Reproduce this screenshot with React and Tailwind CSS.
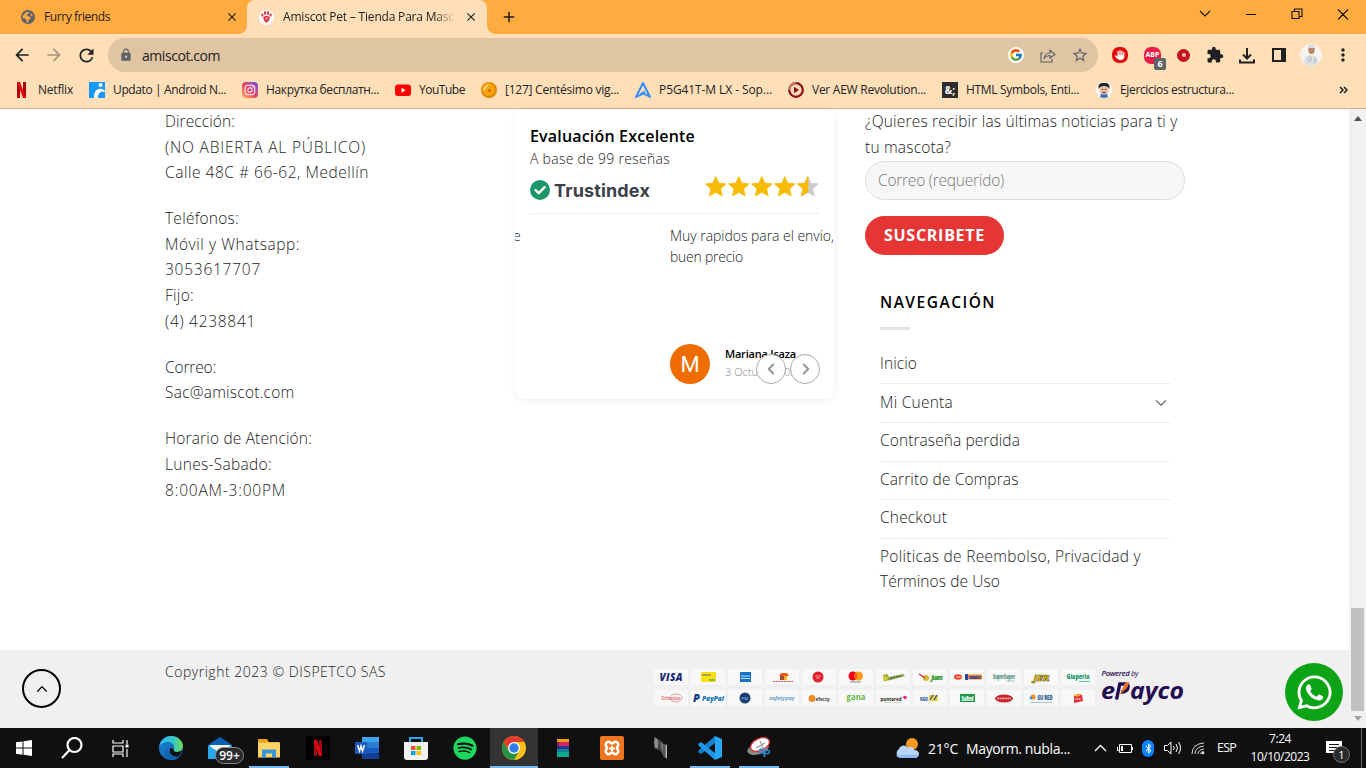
import React, { useLayoutEffect, useRef } from "react";
import { MdArrowBack, MdArrowForward, MdRefresh, MdLock, MdExtension, MdMoreVert, MdStarBorder, MdClose, MdAdd } from "react-icons/md";
import { FaWhatsapp, FaSpotify, FaInstagram, FaHand, FaBluetoothB } from "react-icons/fa6";
import { FcGoogle } from "react-icons/fc";
import { ChevronDown, ChevronLeft, ChevronRight, ChevronUp } from "lucide-react";

/* One line of text whose tracking is adjusted so that it spans `w` pixels. */
function Line({ w, className = "", children }) {
  const ref = useRef(null);
  useLayoutEffect(() => {
    const el = ref.current;
    const fit = () => {
      el.style.letterSpacing = "0px";
      const natural = el.getBoundingClientRect().width;
      el.style.letterSpacing = (w - natural) / el.textContent.length + "px";
    };
    fit();
    document.fonts?.ready.then(fit);
  }, [w]);
  return (
    <span className={"block " + className}>
      <span ref={ref} className="inline-block whitespace-nowrap">{children}</span>
    </span>
  );
}

/* ---------- browser ---------- */

function Globe() {
  return (
    <svg width="14" height="14" viewBox="0 0 14 14">
      <circle cx="7" cy="7" r="7" fill="#5f6368" />
      <path d="M2 5.500 5 2.200 8.200 2l-.6 1.800-2 .8.6 1.400 2.600.8 1 2-2 .8-.6 2.600-1.600.6.2-2.400L4 8.600 1.600 8z M10 3.400l2 2.400-1.600.4-.9-1.500z" fill="#ffab40" />
    </svg>
  );
}

function TabStrip() {
  return (
    <div className="flex h-[34px] bg-[#ffab40] text-[12px] text-[#202124]">
      <div className="relative flex w-[247px] items-center pl-[21px] pr-[8px]">
        <Globe />
        <Line w={66} className="ml-[9px] flex-1">Furry friends</Line>
        <MdClose size={14} />
        <span className="absolute bottom-0 right-0 size-[8px] bg-[radial-gradient(circle_at_0_0,transparent_7.500px,#ffdfb8_8px)]" />
      </div>
      <div className="flex w-[240px] items-center rounded-t-[8px] bg-[#ffdfb8] pl-[12px] pr-[9px]">
        <span className="flex size-[15px] items-center justify-center rounded-full bg-white">
          <svg width="11" height="12" viewBox="0 0 11 12" fill="#d33c42">
            <ellipse cx="1.400" cy="4" rx="1.100" ry="1.800" /><ellipse cx="4" cy="2" rx="1.100" ry="1.900" />
            <ellipse cx="7" cy="2" rx="1.100" ry="1.900" /><ellipse cx="9.600" cy="4" rx="1.100" ry="1.800" />
            <path d="M5.500 4.500 9 6.200 8 9.400 5.500 12 3 9.400 2 6.200z" /><circle cx="5.500" cy="7.400" r="1" fill="#f6c7c9" />
          </svg>
        </span>
        <div className="ml-[9px] w-[172px] overflow-hidden [mask-image:linear-gradient(to_right,black_88%,transparent)]">
          <Line w={194}>Amiscot Pet – Tienda Para Mascotas</Line>
        </div>
        <MdClose size={14} className="ml-auto" />
      </div>
      <div className="flex flex-col justify-end"><span className="size-[8px] bg-[radial-gradient(circle_at_100%_0,transparent_7.500px,#ffdfb8_8px)]" /></div>
      <MdAdd size={18} className="ml-[5px] mt-[8px]" />
      <svg className="ml-auto mr-[17px] mt-[8px]" width="150" height="13" viewBox="0 0 150 13" fill="none" stroke="#111" strokeWidth="1.100">
        <path d="M1 3l5 5 5-5M47 6.500h10M93 3.500h7v7h-7zM95.500 3.500v-2.500h7.500v7.500h-3M139 1.500l10 10M149 1.500l-10 10" />
      </svg>
    </div>
  );
}

function Extensions() {
  return (
    <>
      <span className="ml-[14px] flex size-[16px] items-center justify-center rounded-[7px] bg-[#e60b0b] text-white"><FaHand size={10} /></span>
      <span className="relative ml-[16px] flex size-[17px] items-center justify-center rounded-[7px] bg-[#ee1d48] text-[7px] font-bold text-white">
        ABP
        <span className="absolute left-[10px] top-[11px] flex h-[12px] w-[12px] items-center justify-center rounded-[2px] bg-[#5f6368] text-[9px] leading-none">6</span>
      </span>
      <span className="ml-[16px] flex size-[13px] items-center justify-center rounded-full bg-[#c6151c]"><span className="h-[4px] w-[4px] rounded-full bg-[#f5c5c5]" /></span>
      <MdExtension size={18} className="ml-[16px]" />
      <svg className="ml-[15px]" width="16" height="17" viewBox="0 0 16 17" fill="none" stroke="#202124" strokeWidth="2"><path d="M8 1v10M4 7.500l4 4 4-4M1 12.500v3h14v-3" /></svg>
      <svg className="ml-[17px]" width="14" height="14" viewBox="0 0 14 14"><path d="M1 1h12v12H1z" fill="none" stroke="#202124" strokeWidth="2" /><path d="M9 1h5v12H9z" fill="#202124" /></svg>
      <svg className="ml-[14px]" width="22" height="22" viewBox="0 0 22 22">
        <circle cx="11" cy="11" r="11" fill="#f7f3ee" />
        <path d="M4 19c0-6 3-8 7-8s7 2 7 8c-3 3-11 3-14 0z" fill="#dedfe4" />
        <ellipse cx="11.500" cy="5.500" rx="3.200" ry="4.600" fill="#b98568" /><path d="M8.500 4c0-4 6-4 6 0z" fill="#ddd" />
        <path d="M10 12l1.500 5M7 14l3 4M16 14l-2 5" stroke="#aeb0ba" />
      </svg>
      <MdMoreVert size={20} className="ml-[11px]" />
    </>
  );
}

function Toolbar() {
  return (
    <div className="flex h-[34px] items-center text-[#202124]">
      <MdArrowBack size={20} className="ml-[12px]" />
      <MdArrowForward size={20} className="ml-[12px] text-[#a8947c]" />
      <MdRefresh size={21} className="ml-[12px]" />
      <div className="ml-[11px] flex h-[34px] w-[990px] items-center rounded-full bg-[#dfc5a2] pl-[11px] pr-[9px]">
        <MdLock size={14} className="text-[#5f6368]" />
        <Line w={78} className="ml-[9px] text-[14px]">amiscot.com</Line>
        <span className="ml-auto flex size-[16px] items-center justify-center rounded-full bg-white"><FcGoogle size={14} /></span>
        <svg className="ml-[16px]" width="16" height="15" viewBox="0 0 16 15" fill="none" stroke="#5f6368" strokeWidth="1.200"><path d="M3 5H1v9h11v-3M4 11c.5-4 2.500-6 6-6V2l5 4.500L10 10V7.500c-3 0-4.500 1-6 3.500z" /></svg>
        <MdStarBorder size={18} className="ml-[15px] text-[#5f6368]" />
      </div>
      <Extensions />
    </div>
  );
}

const bookmarks = [
  ["w-[75px]", "Netflix", 35, <svg width="16" height="16" viewBox="0 0 16 16"><path d="M3 0h3v16H3z M9 0h3v16H9z" fill="#b1060f" /><path d="M3 0h3l6 16H9z" fill="#e50914" /></svg>],
  ["w-[153px]", "Updato | Android N...", 113, <svg width="16" height="16" viewBox="0 0 16 16"><path d="M0 0h16v16H0z" fill="#1499ff" /><circle cx="11.500" cy="3" r="2" fill="#fff" /><path d="M5 16c0-6 2-10 8-9 2 .3 3 1.500 3 3-5-1-7 1-7 6z" fill="#fff" /></svg>],
  ["w-[153px]", "Накрутка бесплатн...", 113, <span className="flex size-4 items-center justify-center rounded-[4px] bg-linear-to-tr from-[#fdb043] via-[#ea3468] to-[#5a45dc] text-white"><FaInstagram size={12} /></span>],
  ["w-[86px]", "YouTube", 46, <svg width="16" height="16" viewBox="0 0 16 16"><rect y="2.500" width="16" height="11.500" rx="3" fill="#f00" /><path d="M6.500 5.800v5l4-2.500z" fill="#fff" /></svg>],
  ["w-[154px]", "[127] Centésimo vig...", 114, <svg width="16" height="16" viewBox="0 0 16 16"><circle cx="8" cy="8" r="8" fill="#df8503" /><circle cx="7.500" cy="7.500" r="6.500" fill="#f7a20e" /><path d="M2.500 9A6 6 0 0 1 7 2.500c2 0 .5 1.500-1 2.500S4 9.500 2.500 9z" fill="#ffd477" /><circle cx="8.500" cy="8.500" r="1.200" fill="#d4470e" /></svg>],
  ["w-[153px]", "P5G41T-M LX - Sop...", 113, <svg width="16" height="16" viewBox="0 0 16 16" fill="none" stroke="#2e8cff" strokeWidth="1.900" strokeLinejoin="round"><path d="M8 1 15 15 9 11.500 1 15z M5 12.500 10 9.500" /></svg>],
  ["w-[154px]", "Ver AEW Revolution...", 114, <svg width="16" height="16" viewBox="0 0 16 16"><circle cx="8" cy="8" r="6.800" fill="none" stroke="#8f1116" strokeWidth="2.200" /><path d="M1.200 8A6.800 6.800 0 0 1 8 1.200" fill="none" stroke="#c67d6b" strokeWidth="2.200" /><path d="M6 4.800v6.400L11 8z" fill="#8f1116" /></svg>],
  ["w-[154px]", "HTML Symbols, Enti...", 113, <span className="flex size-4 items-center justify-center bg-[#2c2c2c] text-[10px] font-bold text-white">&amp;;</span>],
  ["w-[154px]", "Ejercicios estructura...", 114, <svg width="16" height="16" viewBox="0 0 16 16"><circle cx="8" cy="8" r="8" fill="#fff" /><path d="M5 11h6l1 4q-4 2-8 0z" fill="#3978cb" /><path d="M3.500 5h9v4q-1 3.500-4.500 3.500T3.500 9z" fill="#f3b99b" /><path d="M2.500 7C2 1 5 1 8 1s6 0 5.500 6L12 5 8 4 4 5z" fill="#222" /><path d="M6 7.500h1M9 7.500h1M6.500 10.500h3" stroke="#333" /></svg>],
];

function Bookmarks() {
  return (
    <div className="flex h-[37px] items-center border-b border-[#cdb290] pl-[14px] text-[12px] text-[#202124]">
      {bookmarks.map(([cell, label, w, icon]) => (
        <div key={label} className={"flex shrink-0 items-center gap-[8px] " + cell}>
          <span className="w-4 shrink-0">{icon}</span>
          <Line w={w}>{label}</Line>
        </div>
      ))}
      <svg className="ml-auto mr-[18px]" width="9" height="8" viewBox="0 0 9 8" fill="none" stroke="#202124" strokeWidth="1.500"><path d="M1 1l3 3-3 3M5 1l3 3-3 3" /></svg>
    </div>
  );
}

/* ---------- page ---------- */

const contact = [
  [["Dirección:", 70], ["(NO ABIERTA AL PÚBLICO)", 201], ["Calle 48C # 66-62, Medellín", 204]],
  [["Teléfonos:", 74], ["Móvil y Whatsapp:", 135], ["3053617707", 96], ["Fijo:", 29], ["(4) 4238841", 91]],
  [["Correo:", 51], ["Sac@amiscot.com", 129.500]],
  [["Horario de Atención:", 147], ["Lunes-Sabado:", 107], ["8:00AM-3:00PM", 121]],
];

function Contact() {
  return (
    <div className="flex w-[320px] flex-col gap-[20.500px] text-[15.500px] font-[350] leading-[25.600px] text-[#222]">
      {contact.map((block) => (
        <div key={block[0][0]}>
          {block.map(([t, w]) => <Line key={t} w={w}>{t}</Line>)}
        </div>
      ))}
    </div>
  );
}

const STAR = "M12 .6l3.300 7.400 8.100.8-6.100 5.400 1.800 7.900L12 18l-7.100 4.100 1.800-7.900L.6 8.800l8.100-.8z";

function Stars() {
  return (
    <svg width="115" height="24" viewBox="0 0 115 24">
      {[0, 23, 46, 69].map((x) => <path key={x} d={STAR} transform={`translate(${x} 1) scale(.9)`} fill="#f6bb06" stroke="#f6bb06" strokeLinejoin="round" />)}
      <path d={STAR} transform="translate(92 1) scale(.9)" fill="#ccc" stroke="#ccc" strokeLinejoin="round" />
      <path d="M12 .6V18l-7.100 4.100 1.800-7.900L.6 8.800l8.100-.8z" transform="translate(92 1) scale(.9)" fill="#f6bb06" stroke="#f6bb06" strokeLinejoin="round" />
    </svg>
  );
}

function Reviews() {
  return (
    <div className="h-[290px] w-[320px] overflow-hidden rounded-[10px] bg-white px-[15px] pt-[15px] shadow-[0_1px_6px_rgba(0,0,0,0.08)]">
      <Line w={165} className="text-[16px] font-semibold leading-[24px] text-black">Evaluación Excelente</Line>
      <Line w={140} className="text-[14px] font-[350] leading-[22px] text-[#222]">A base de 99 reseñas</Line>
      <div className="mt-[4px] flex h-[32px] items-center">
        <svg width="20" height="20" viewBox="0 0 20 20"><circle cx="10" cy="10" r="10" fill="#1b976a" /><path d="M5.500 10l3.200 3.200 6-6" fill="none" stroke="#fff" strokeWidth="2.400" strokeLinecap="round" strokeLinejoin="round" /></svg>
        <Line w={96} className="ml-[4px] font-[Inter] text-[18px] font-bold text-[#3b404b]">Trustindex</Line>
        <div className="mb-[6px] ml-auto"><Stars /></div>
      </div>
      <div className="mt-[7px] border-t border-[#eee]" />
      <div className="-mx-[15px] mt-[11px] flex h-[110px] text-[14px] font-[350] leading-[21px] text-[#222]">
        <span className="w-[155px] -indent-[2px]">e</span>
        <div><Line w={164}>Muy rapidos para el envio,</Line><Line w={73}>buen precio</Line></div>
      </div>
      <div className="relative ml-[140px] mt-[9px] flex h-[40px]">
        <span className="flex size-[40px] shrink-0 items-center justify-center rounded-full bg-[#ef6c00] font-[Roboto] text-[22px] text-white">M</span>
        <div className="ml-[15px] pt-[1px]">
          <Line w={71} className="text-[11px] font-semibold leading-[18px] text-black">Mariana Isaza</Line>
          <Line w={78} className="text-[11px] font-light leading-[18px] text-[#888]">3 Octubre 2023</Line>
        </div>
        <div className="absolute right-0 top-[10px] flex gap-[4px] text-[#999]">
          <span className="flex size-[30px] items-center justify-center rounded-full border border-[#aaa] bg-white pr-[1px]"><ChevronLeft size={18} strokeWidth={2.800} /></span>
          <span className="flex size-[30px] items-center justify-center rounded-full border border-[#aaa] bg-white pl-[1px]"><ChevronRight size={18} strokeWidth={2.800} /></span>
        </div>
      </div>
    </div>
  );
}

const nav = [["Inicio", 37], ["Mi Cuenta", 73], ["Contraseña perdida", 140], ["Carrito de Compras", 138.500], ["Checkout", 67]];

function Sidebar() {
  return (
    <div className="w-[320px] text-[15.500px] font-[350] leading-[25.600px] text-[#222]">
      <Line w={312.500}>¿Quieres recibir las últimas noticias para ti y</Line>
      <Line w={86}>tu mascota?</Line>
      <div className="mt-[1px] flex h-[39px] items-center rounded-full border border-[#ddd] bg-[#f7f7f7] pl-[12px] text-[#777]">
        <Line w={126}>Correo (requerido)</Line>
      </div>
      <div className="mt-[16px] flex h-[39px] w-[139px] items-center rounded-full bg-[#e63535] pl-[19px] text-[16px] font-bold text-white">
        <Line w={101}>SUSCRIBETE</Line>
      </div>
      <div className="mt-[35px] px-[15px]">
        <Line w={116} className="text-[15.500px] font-semibold text-black">NAVEGACIÓN</Line>
        <div className="mt-[11px] h-[3px] w-[30px] bg-[#e3e3e3]" />
        <div className="mt-[16px]">
          {nav.map(([t, w], i) => (
            <div key={t} className="flex h-[38.600px] items-center border-b border-[#ececec] pb-[1.500px]">
              <Line w={w}>{t}</Line>
              {i === 1 && <ChevronDown size={18} strokeWidth={1.900} className="ml-auto mt-[2px] text-[#777]" />}
            </div>
          ))}
          <div className="pt-[5px]">
            <Line w={261}>Politicas de Reembolso, Privacidad y</Line>
            <Line w={120}>Términos de Uso</Line>
          </div>
        </div>
      </div>
    </div>
  );
}

/* Each payment badge is a small 34×16 drawing. */
const badges = [
  <text x="17" y="12" fontSize="10" fontWeight="800" fontStyle="italic" fill="#1a2a73" textLength="23">VISA</text>,
  <><rect x="10" y="3" width="15" height="10" fill="#f7df12" /><path d="M11 6h9" stroke="#4d7391" /><path d="M18 11h6" stroke="#278b8b" /></>,
  <><rect x="12" y="3" width="11" height="10" fill="#1674c4" /><path d="M13 7h9M13 9.500h9" stroke="#c4e0f5" /></>,
  <><path d="M14 7l2-3h6l2 3z" fill="#e45d19" /><path d="M15 7h6v4h-6z" fill="#a0522d" /><path d="M19 7h3v4h-3z" fill="#f6b21b" /><path d="M8 12.500h20" stroke="#e14b4b" strokeDasharray="2 .7" /></>,
  <><circle cx="16" cy="8" r="5.500" fill="#e3202b" /><path d="M13 7h6M14 9h4" stroke="#ffc0c0" strokeWidth=".8" /></>,
  <><circle cx="14" cy="7" r="4.500" fill="#ea001b" /><circle cx="19.500" cy="7" r="4.500" fill="#f79e1b" /><path d="M16.800 3.500a4.500 4.500 0 0 1 0 7a4.500 4.500 0 0 1 0-7" fill="#ff5f00" /><path d="M11 13h11" stroke="#555" strokeWidth=".7" /></>,
  <><path d="M7 6l4-1 2 3 14-3 2 2-14 4-7 1z" fill="#8ba63b" /><path d="M9 5l1 3 3 0-2 2 1 2-3-1-2 1 1-3z" fill="#e4cc24" /><path d="M14 9l12-2" stroke="#3d567c" strokeDasharray="2 1" /></>,
  <><circle cx="13" cy="9" r="3" fill="#d5b82d" /><path d="M6 5l6 4" stroke="#d13434" strokeWidth="1.500" /><text x="24" y="11" fontSize="7" fontWeight="800" fontStyle="italic" fill="#41a13c" textLength="12">Juers</text></>,
  <><ellipse cx="8" cy="8" rx="4" ry="2.800" fill="#e8422c" /><path d="M6 8h5" stroke="#ffd8b3" /><rect x="15" y="5.500" width="17" height="5" rx="1" fill="#ee8427" /><path d="M15 5h3v6h-3z" fill="#2a4a9b" /><text x="25" y="10" fontSize="4" fontWeight="800" fill="#284591" textLength="12">BARATO</text></>,
  <><text x="17" y="10" fontSize="6" fontWeight="800" fill="#51937c" textLength="22" lengthAdjust="spacingAndGlyphs">SuperSuper</text><path d="M19 12h9" stroke="#7aa897" strokeWidth=".6" /></>,
  <text x="17.500" y="12" fontSize="9" fontWeight="800" fontStyle="italic" fill="#f5c800" stroke="#3c3c18" strokeWidth=".5" textLength="16" lengthAdjust="spacingAndGlyphs">JER</text>,
  <><text x="17" y="10" fontSize="7.500" fontWeight="800" fill="#15966b" textLength="23" lengthAdjust="spacingAndGlyphs">Giaperla</text><path d="M18 12.500h11" stroke="#3aa986" strokeWidth=".8" /></>,
  <><text x="17" y="10" fontSize="5.500" fontWeight="600" fill="#de5b59" textLength="19" lengthAdjust="spacingAndGlyphs">Drifwoplaza</text><ellipse cx="22" cy="8" rx="6" ry="4" fill="none" stroke="#e17977" strokeWidth=".7" /></>,
  <><text x="5.500" y="12" fontSize="11" fontWeight="900" fontStyle="italic" fill="#123b83">P</text><text x="22" y="11" fontSize="7" fontWeight="800" fontStyle="italic" fill="#1874b8" textLength="22" lengthAdjust="spacingAndGlyphs">PayPal</text></>,
  <><circle cx="17" cy="8" r="5.500" fill="#173f70" /><text x="17" y="9.500" fontSize="4" fill="#c9def4" textLength="7">PSE</text></>,
  <text x="17" y="10" fontSize="6" fontStyle="italic" fontWeight="600" fill="#4c8fbe" textLength="25" lengthAdjust="spacingAndGlyphs">safetypay</text>,
  <><circle cx="10" cy="8.500" r="3.400" fill="#ee8b25" /><text x="20.500" y="10.500" fontSize="6" fontWeight="700" fill="#3c3c3c" textLength="14" lengthAdjust="spacingAndGlyphs">efecty</text></>,
  <text x="17" y="10" fontSize="9" fontWeight="700" fill="#66b842" textLength="19" lengthAdjust="spacingAndGlyphs">gana</text>,
  <><text x="15" y="10.500" fontSize="6" fontWeight="700" fill="#222" textLength="21" lengthAdjust="spacingAndGlyphs">puntored</text><circle cx="29" cy="7.500" r="1.800" fill="#df2a86" /><path d="M8 12.500h16" stroke="#aaa" strokeWidth=".5" /></>,
  <><text x="11" y="11" fontSize="5" fontWeight="800" fill="#2f63a1" textLength="8" lengthAdjust="spacingAndGlyphs">RED</text><path d="M16 5h9v6h-9z" fill="#ecd14b" /><path d="M17 10l3-5M21 10l3-5" stroke="#355386" strokeWidth="1.300" /></>,
  <><rect x="10" y="4" width="15" height="8" fill="#169b45" /><text x="17.500" y="10.500" fontSize="6.500" fontWeight="800" fill="#fff" textLength="12" lengthAdjust="spacingAndGlyphs">SuRed</text></>,
  <><ellipse cx="17" cy="8.500" rx="9" ry="4" fill="#c9252d" /><path d="M10 8.500h14" stroke="#f0bbbb" strokeWidth="1.500" strokeDasharray="2 .6" /></>,
  <><circle cx="9" cy="7" r="2.500" fill="#f28d21" /><circle cx="7" cy="8" r="1.500" fill="#329be0" /><text x="21" y="10" fontSize="6" fontWeight="800" fill="#1e568e" textLength="15" lengthAdjust="spacingAndGlyphs">SU RED</text><path d="M6 12.500h22" stroke="#8aa" strokeWidth=".7" /></>,
  <><path d="M13 6l4-2 4 1 1 6-9 2z" fill="#e32f35" /><path d="M13 5l3 1 3-1" stroke="#f5bd26" strokeWidth="1.500" fill="none" /><path d="M14 9h6" stroke="#fff" strokeDasharray="1.500 .5" /></>,
];

function Payments() {
  return (
    <div className="grid w-[441px] grid-cols-12 gap-x-[3px] gap-y-[5px]">
      {badges.map((b, i) => (
        <svg key={i} width="34" height="16" viewBox="0 0 34 16" className="bg-[#f8f8f8] font-['Open_Sans']" textAnchor="middle" fill="none">{b}</svg>
      ))}
    </div>
  );
}

function EPayco() {
  return (
    <svg className="ml-[6px] font-['Open_Sans']" width="86" height="40" viewBox="0 0 86 40" fill="#230b50" fontStyle="italic">
      <text x="0.500" y="8" fontSize="7.500" fontWeight="600" textLength="37">Powered <tspan fontWeight="400">by</tspan></text>
      <text x="0" y="31" fontSize="24" fontWeight="700" textLength="14" lengthAdjust="spacingAndGlyphs">e</text>
      <path d="M15.500 31.500 18.800 16h5.500q3.500 0 2.700 3.500-1 4.500-7 4.500" fill="none" stroke="#230b50" strokeWidth="3.400" />
      <path d="M28.500 14 26 20l-7.500 7L24 15z" fill="#f36f21" />
      <text x="29" y="31" fontSize="24" fontWeight="700" textLength="54" lengthAdjust="spacingAndGlyphs">ayco</text>
    </svg>
  );
}

function Page() {
  return (
    <div className="flex h-[619px]">
      <div className="flex w-[1349px] flex-col bg-white font-['Open_Sans',sans-serif]">
        <div className="flex h-[541px] gap-[30px] pl-[165px]">
          <Contact />
          <Reviews />
          <Sidebar />
        </div>
        <div className="flex h-[78px] items-start bg-[#f0f0f0] pl-[22px]">
          <span className="mt-[19px] flex size-[39px] items-center justify-center rounded-full border-2 border-black"><ChevronUp size={18} strokeWidth={1.500} /></span>
          <div className="ml-[104px] mt-[9px] w-[489px] text-[14px] font-[350] leading-[25px] text-[#222]"><Line w={221}>Copyright 2023 © DISPETCO SAS</Line></div>
          <div className="mt-[19px]"><Payments /></div>
          <div className="mt-[18px]"><EPayco /></div>
          <span className="ml-auto mr-[6px] mt-[13px] flex size-[58px] items-center justify-center rounded-full bg-[#0da317] text-white"><FaWhatsapp size={39} /></span>
        </div>
      </div>
      <div className="flex w-[17px] flex-col items-center justify-between bg-[#f1f1f1] py-[7px]">
        <svg width="8" height="5" viewBox="0 0 8 5"><path d="M0 5 4 0l4 5z" fill="#505050" /></svg>
        <div className="flex flex-col items-center gap-[5px]">
          <div className="h-[103px] w-[13px] bg-[#c1c1c1]" />
          <svg width="8" height="5" viewBox="0 0 8 5"><path d="M0 0 4 5l4-5z" fill="#a3a3a3" /></svg>
        </div>
      </div>
    </div>
  );
}

/* ---------- taskbar ---------- */

const apps = [
  ["Edge", "", <svg width="24" height="24" viewBox="0 0 24 24"><defs><linearGradient id="ea"><stop stopColor="#2bb7f3" /><stop offset=".6" stopColor="#36c7c6" /><stop offset="1" stopColor="#70dc4c" /></linearGradient><linearGradient id="eb" x2="1" y2="1"><stop stopColor="#198ade" /><stop offset="1" stopColor="#114c92" /></linearGradient></defs><circle cx="12" cy="12" r="12" fill="url(#eb)" /><path d="M.3 10C2 3 7 0 12 0c7 0 12 5 12 10 0 4-3 6-6.500 6-3 0-4-1.500-3-3C16 10 14 6 9 6c-4 0-7 2-8.700 4z" fill="url(#ea)" /><path d="M15 13c-1 2 0 3 3 3 2 0 4-.7 5-2-1 3-2 5-4 6.500C13 21 9 17 11.500 12z" fill="#101010" /><path d="M9 11c-3 6 1 11 8 11 2 0 3-1 4-2-2 3-5 4-9 4C6 24 4 15 9 11z" fill="#1366b5" /></svg>],
  ["Mail", "", <span className="relative"><svg width="24" height="24" viewBox="0 0 24 24"><path d="M0 9 12 1l12 8v14H0z" fill="#0d5fb4" /><path d="M2 9h20v8H2z" fill="#f4f4f4" /><path d="M0 9l12 8 12-8v14H0z" fill="#28a8ea" /></svg><span className="absolute left-[7px] top-[11px] flex h-[17px] w-[29px] items-center justify-center rounded-full border border-[#888] bg-[#272b2e] text-[12px] font-semibold leading-none text-white">99+</span></span>],
  ["Explorer", "w-[40px]", <svg width="22" height="19" viewBox="0 0 22 19"><path d="M0 0h9l2 3h10v15H0z" fill="#e8a317" /><path d="M0 3.500h22v15H0z" fill="#ffd567" /><path d="M4 18.500v-8h14v8h-4v-4H8v4z" fill="#3796dc" /></svg>],
  ["Netflix", "", <svg width="24" height="24" viewBox="0 0 24 24"><path d="M0 0h24v24H0z" fill="#000" /><path d="M8 4h3v16H8zM13 4h3v16h-3z" fill="#a5060e" /><path d="M8 4h3l5 16h-3z" fill="#e50914" /></svg>],
  ["Word", "", <svg width="24" height="22" viewBox="0 0 24 22"><path d="M7 0h17v6H7z" fill="#41a5ee" /><path d="M7 5h17v6H7z" fill="#2b7cd3" /><path d="M7 11h17v5H7z" fill="#185abd" /><path d="M7 16h17v6H7z" fill="#103f91" /><rect y="5" width="12" height="12" rx="1" fill="#185abd" /><path d="M2.500 8 4.500 14 6 9l1.500 5L9.500 8" fill="none" stroke="#fff" strokeWidth="1.500" /></svg>],
  ["Store", "", <svg width="24" height="24" viewBox="0 0 24 24"><path d="M6 7V2h12v5" fill="none" stroke="#2aa4e5" strokeWidth="2" /><path d="M0 6h24v15q0 3-3 3H3q-3 0-3-3z" fill="#f1f1f1" /><path d="M7 10h4.500v4H7z" fill="#f25022" /><path d="M12.500 10H17v4h-4.500z" fill="#7fba00" /><path d="M7 15h4.500v4H7z" fill="#00a4ef" /><path d="M12.500 15H17v4h-4.500z" fill="#ffb900" /></svg>],
  ["Spotify", "", <FaSpotify size={24} className="text-[#1ed760]" />],
  ["Chrome", "w-[48px]", <svg width="24" height="24" viewBox="0 0 24 24"><circle cx="12" cy="12" r="12" fill="#fbc116" /><path d="M1.600 6A12 12 0 0 1 22.400 6H12v6l-5 3z" fill="#e33b2e" /><path d="M1.600 6A12 12 0 0 0 12 24l5.200-9H12L6.800 15z" fill="#229342" /><circle cx="12" cy="12" r="6" fill="#fff" /><circle cx="12" cy="12" r="4.700" fill="#2f7de9" /></svg>],
  ["Stripes", "", <svg width="12" height="18" viewBox="0 0 12 18"><path d="M0 0h12v4H0z" fill="#ee9b16" /><path d="M0 3h12v4H0z" fill="#d22965" /><path d="M0 7h12v4H0z" fill="#2b3190" /><path d="M0 10h12v4H0z" fill="#10809b" /><path d="M0 13h12v5H0z" fill="#0caa8e" /><path d="M1 3v6" stroke="#202050" /></svg>],
  ["Xampp", "", <svg width="24" height="24" viewBox="0 0 24 24"><rect width="24" height="24" rx="2" fill="#ed751f" /><path d="M7.500 6c2.500-1 3 1.500 4.500 1.500S14 5 16.500 6c3 1.500 1.500 4 .5 6 1 2 2.500 4.500-.5 6-2.500 1-3-1.500-4.500-1.500S10 19 7.500 18c-3-1.500-1.500-4-.5-6-1-2-2.500-4.500.5-6z" fill="none" stroke="#fff" strokeWidth="2.600" /><path d="M9 12.500h6M12 10v5" stroke="#fff" strokeWidth="2" /></svg>],
  ["Device", "", <svg width="16" height="24" viewBox="0 0 16 24"><path d="M1 1l9 5v12l-4-4-4-1z" fill="#444" /><path d="M2 1l3 3v8l-3 0-1-5z" fill="#8a8a8a" /><path d="M5 6l9 3v14l-4-3-1-6z" fill="#777" /><path d="M11 8v12M7 6v8" stroke="#303030" /><path d="M13.500 9v13" stroke="#bbb" /></svg>],
  ["Code", "w-[40px]", <svg width="24" height="24" viewBox="0 0 24 24"><path d="M17 0 24 3v18l-7 3z" fill="#27a7f5" /><path d="M17 0v7L3 18l-3-2 1-2z" fill="#1580cb" /><path d="M17 24v-7L3 6 0 8l1 2z" fill="#2196e6" /></svg>],
  ["Snip", "w-[40px]", <svg width="24" height="24" viewBox="0 0 24 24"><ellipse cx="11" cy="13" rx="11" ry="5.500" fill="#888" transform="rotate(-15 11 13)" /><ellipse cx="13" cy="8.500" rx="10" ry="6" fill="#fff" stroke="#d92e35" strokeWidth="1.300" transform="rotate(-25 13 8.500)" /><path d="M13 5l4 9M9 12l9-5" stroke="#999" strokeWidth="1.200" /><circle cx="14.500" cy="15" r="2" fill="none" stroke="#2b8bd5" strokeWidth="1.400" /><ellipse cx="20" cy="16" rx="2.500" ry="1.700" fill="none" stroke="#2b8bd5" strokeWidth="1.400" /><path d="M17 15l.5 6" stroke="#2b8bd5" strokeWidth="1.800" /></svg>],
];

function Tray() {
  return (
    <div className="ml-auto flex items-center text-white">
      <svg width="25" height="20" viewBox="0 0 25 20"><circle cx="17" cy="6" r="6" fill="#f59a24" /><path d="M5 20a5 5 0 0 1-1-9c1-4 7-5 9-1 2-2 6-1 6 2 7 0 6 8 1 8z" fill="#b7d4fa" /><path d="M5 20a5 5 0 0 1-4-3h22q-1 3-3 3z" fill="#8fb9f4" /></svg>
      <Line w={30} className="ml-[8px] text-[14px]">21°C</Line>
      <Line w={104} className="ml-[8px] text-[14px]">Mayorm. nubla...</Line>
      <svg className="ml-[24px]" width="13" height="9" viewBox="0 0 13 9" fill="none" stroke="#fff" strokeWidth="1.300"><path d="M1 7l5.500-5.500L12 7" /></svg>
      <svg className="ml-[10px]" width="16" height="11" viewBox="0 0 16 11"><path d="M2.500 1.500h12v8h-12zM.5 4v3.500h2" fill="none" stroke="#fff" /><path d="M4 3h2v5H4zM14 4h2v3h-2z" fill="#fff" /></svg>
      <span className="ml-[9px] flex h-[17px] w-[12px] items-center justify-center rounded-full bg-[#0883ff]"><FaBluetoothB size={11} /></span>
      <svg className="ml-[10px]" width="17" height="14" viewBox="0 0 17 14" fill="none" stroke="#fff"><path d="M.5 4.500h3L7 1v12L3.500 9.500h-3zM9.500 5q1.500 2 0 4M12 3q3 4 0 8M14.500 1q4 6 0 12" /></svg>
      <svg className="ml-[10px]" width="15" height="14" viewBox="0 0 15 14" fill="none" stroke="#ddd"><path d="M1 13Q1 3 13 2M4 13q0-7 9-8M7 13q0-4 6-5M9.500 13q0-2 3-2.500" /><circle cx="12" cy="12" r="1" fill="#fff" /></svg>
      <Line w={19} className="ml-[11px] text-[12.500px]">ESP</Line>
      <div className="ml-[14px] flex w-[60px] flex-col items-center text-[12px] leading-[18px]">
        <Line w={22}>7:24</Line>
        <Line w={59}>10/10/2023</Line>
      </div>
      <div className="ml-[16px] mr-[11px] flex h-[24px] w-[24px] pt-[4px]">
        <div className="relative">
          <svg width="17" height="17" viewBox="0 0 17 17"><path d="M0 1h16v12h-4v3l-3-3H0z" fill="#fff" /><path d="M3 4.500h10M3 7.500h10M3 10.500h6" stroke="#111" /></svg>
          <span className="absolute left-[7px] top-[6px] flex size-[17px] items-center justify-center rounded-full border border-[#777] bg-[#2b2b2b] text-[11px] leading-none">1</span>
        </div>
      </div>
      <div className="mr-[4px] h-[40px] w-px bg-[#666]" />
    </div>
  );
}

function Taskbar() {
  return (
    <div className="flex h-[40px] bg-[#101010]">
      <div className="flex w-[147px] items-center pl-[16px]">
        <svg width="16" height="16" viewBox="0 0 16 16" fill="#fff"><path d="M0 2.300 6.500 1.400v6.200H0zM7.500 1.200 16 0v7.600H7.500zM0 8.500h6.500v6.200L0 13.800zM7.500 8.500H16V16l-8.500-1.200z" /></svg>
        <svg className="ml-[29px]" width="22" height="22" viewBox="0 0 22 22" fill="none" stroke="#fff" strokeWidth="2.200"><circle cx="13.500" cy="8" r="7" /><path d="M8.500 13 1 21" /></svg>
        <svg className="ml-[29px]" width="18" height="17" viewBox="0 0 18 17" fill="none" stroke="#fff" strokeWidth="1.200"><path d="M1 0v3h10V0M1 6h10v6H1zM1 17v-3h10v3M15 0v4M15 9v8" /><path d="M13.500 4.500h3v3h-3z" fill="#fff" stroke="none" /></svg>
      </div>
      {apps.map(([name, bar, icon]) => (
        <div key={name} className="flex w-[49px] flex-col items-center pr-px">
          <div className={"flex h-[38px] w-[48px] items-center justify-center pt-[2px] " + (name === "Chrome" ? "bg-[#333]" : "")}>{icon}</div>
          <div className={"h-[2px] bg-[#76b9ed] " + bar} />
        </div>
      ))}
      <Tray />
    </div>
  );
}

export default function App() {
  return (
    <div className="flex h-[768px] w-[1366px] flex-col overflow-hidden font-['Open_Sans','Noto_Sans',sans-serif]">
      <TabStrip />
      <div className="h-[75px] bg-[#ffdfb8] pt-[4px]">
        <Toolbar />
        <Bookmarks />
      </div>
      <Page />
      <Taskbar />
    </div>
  );
}
